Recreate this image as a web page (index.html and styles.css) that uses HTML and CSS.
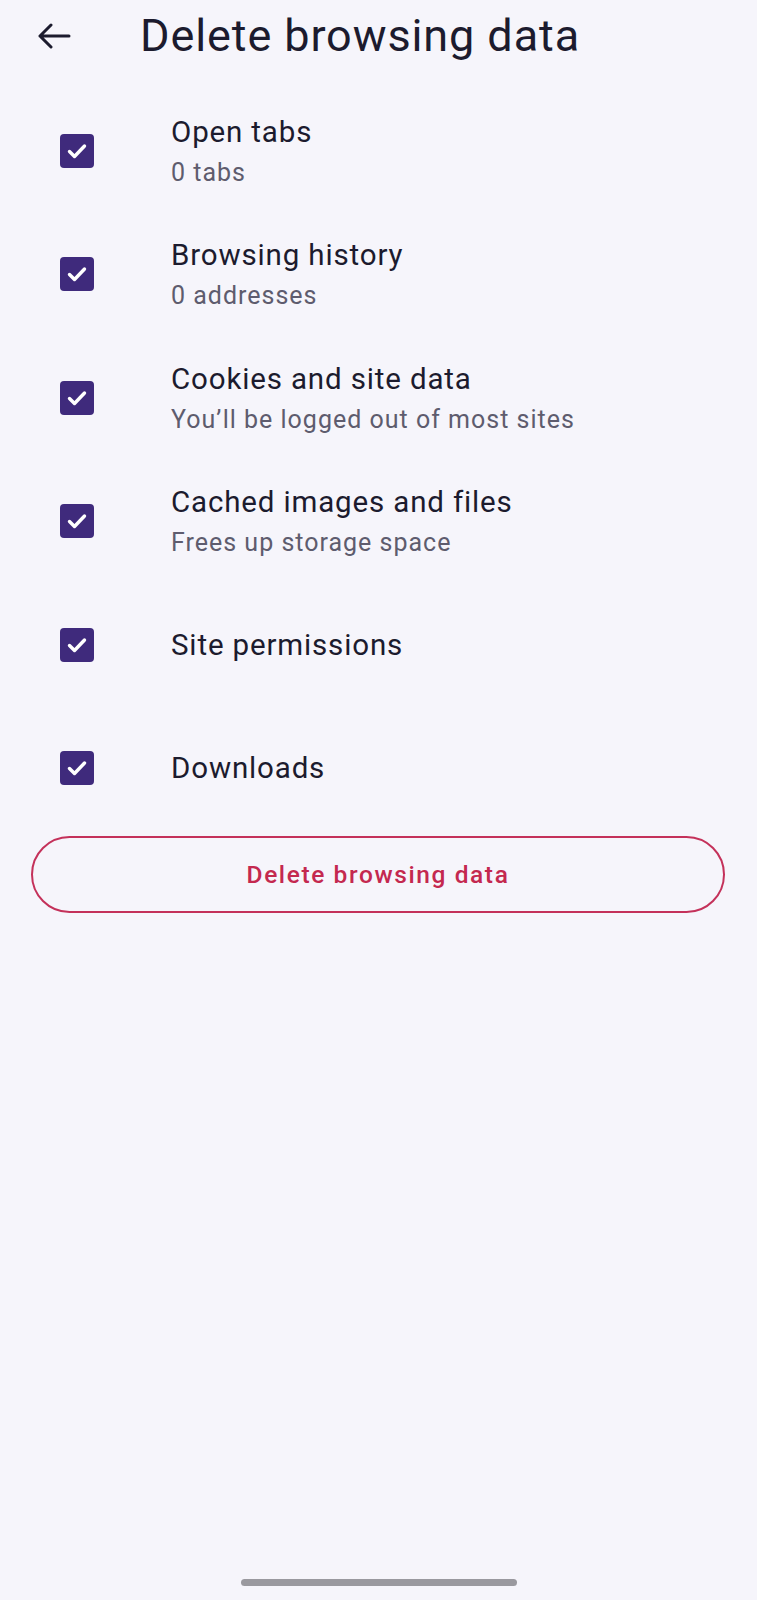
FILE: index.html
```html
<!DOCTYPE html>
<html lang="en">
<head>
<meta charset="utf-8">
<title>Delete browsing data</title>
<link rel="stylesheet" href="styles.css">
</head>
<body>
<div class="screen">
  <header class="topbar">
    <svg class="back" width="34" height="26" viewBox="0 0 34 26" aria-hidden="true">
      <path d="M32 13H3M14 2L3 13l11 11" fill="none" stroke="#1c1b2e" stroke-width="3" stroke-linecap="round" stroke-linejoin="round"/>
    </svg>
    <h1 class="title">Delete browsing data</h1>
  </header>

  <ul class="options">
    <li class="option">
      <span class="check"><svg viewBox="0 0 34 34" width="34" height="34"><path d="M9.5 17.5l5 5 10-10.5" fill="none" stroke="#fff" stroke-width="3.4" stroke-linecap="round" stroke-linejoin="round"/></svg></span>
      <div class="text"><div class="label">Open tabs</div><div class="sub">0 tabs</div></div>
    </li>
    <li class="option">
      <span class="check"><svg viewBox="0 0 34 34" width="34" height="34"><path d="M9.5 17.5l5 5 10-10.5" fill="none" stroke="#fff" stroke-width="3.4" stroke-linecap="round" stroke-linejoin="round"/></svg></span>
      <div class="text"><div class="label">Browsing history</div><div class="sub">0 addresses</div></div>
    </li>
    <li class="option">
      <span class="check"><svg viewBox="0 0 34 34" width="34" height="34"><path d="M9.5 17.5l5 5 10-10.5" fill="none" stroke="#fff" stroke-width="3.4" stroke-linecap="round" stroke-linejoin="round"/></svg></span>
      <div class="text"><div class="label">Cookies and site data</div><div class="sub">You’ll be logged out of most sites</div></div>
    </li>
    <li class="option">
      <span class="check"><svg viewBox="0 0 34 34" width="34" height="34"><path d="M9.5 17.5l5 5 10-10.5" fill="none" stroke="#fff" stroke-width="3.4" stroke-linecap="round" stroke-linejoin="round"/></svg></span>
      <div class="text"><div class="label">Cached images and files</div><div class="sub">Frees up storage space</div></div>
    </li>
    <li class="option">
      <span class="check"><svg viewBox="0 0 34 34" width="34" height="34"><path d="M9.5 17.5l5 5 10-10.5" fill="none" stroke="#fff" stroke-width="3.4" stroke-linecap="round" stroke-linejoin="round"/></svg></span>
      <div class="text"><div class="label">Site permissions</div></div>
    </li>
    <li class="option">
      <span class="check"><svg viewBox="0 0 34 34" width="34" height="34"><path d="M9.5 17.5l5 5 10-10.5" fill="none" stroke="#fff" stroke-width="3.4" stroke-linecap="round" stroke-linejoin="round"/></svg></span>
      <div class="text"><div class="label">Downloads</div></div>
    </li>
  </ul>

  <div class="actions">
    <button class="delete-btn" type="button">Delete browsing data</button>
  </div>

  <div class="spacer"></div>
  <div class="navbar"><span class="handle"></span></div>
</div>
</body>
</html>
```
FILE: styles.css
```css
* { box-sizing: border-box; }
html, body {
  margin: 0;
  padding: 0;
  background: #f6f5fb;
}
body {
  font-family: Roboto, "Noto Sans", sans-serif;
  color: #1c1b2e;
}
.screen {
  width: 757px;
  height: 1600px;
  display: flex;
  flex-direction: column;
  background: #f6f5fb;
}
.topbar {
  height: 72px;
  display: flex;
  align-items: center;
  padding-left: 37px;
}
.back {
  flex: none;
  width: 34px;
  height: 26px;
}
.title {
  margin: 0 0 0 69px;
  font-size: 45px;
  font-weight: 400;
  line-height: 72px;
  color: #1c1b2e;
  letter-spacing: 0.9px;
}
.options {
  list-style: none;
  margin: 0;
  padding: 17px 0 0 0;
}
.option {
  height: 123.5px;
  display: flex;
  align-items: center;
  padding-left: 60px;
}
.check {
  flex: none;
  width: 34px;
  height: 34px;
  border-radius: 4px;
  background: #3f2a7c;
  display: flex;
}
.text {
  margin-left: 77px;
  display: flex;
  flex-direction: column;
}
.label {
  font-size: 29.5px;
  line-height: 38px;
  letter-spacing: 0.85px;
  color: #1c1b2e;
}
.sub {
  font-size: 25px;
  line-height: 38px;
  letter-spacing: 1px;
  color: #5e5c6e;
  margin-top: 3px;
  margin-bottom: -3px;
}
.actions {
  padding: 6px 32px 0 31px;
}
.delete-btn {
  width: 100%;
  height: 77px;
  border: 2px solid #c4315a;
  border-radius: 39px;
  background: transparent;
  color: #c4284f;
  font-family: Roboto, "Noto Sans", sans-serif;
  font-size: 24.5px;
  font-weight: 500;
  letter-spacing: 1.6px;
}
.spacer { flex: 1; }
.navbar {
  height: 36px;
  display: flex;
  justify-content: center;
  padding-top: 15px;
}
.handle {
  width: 276px;
  height: 7px;
  border-radius: 4px;
  background: #9a999f;
}
```
